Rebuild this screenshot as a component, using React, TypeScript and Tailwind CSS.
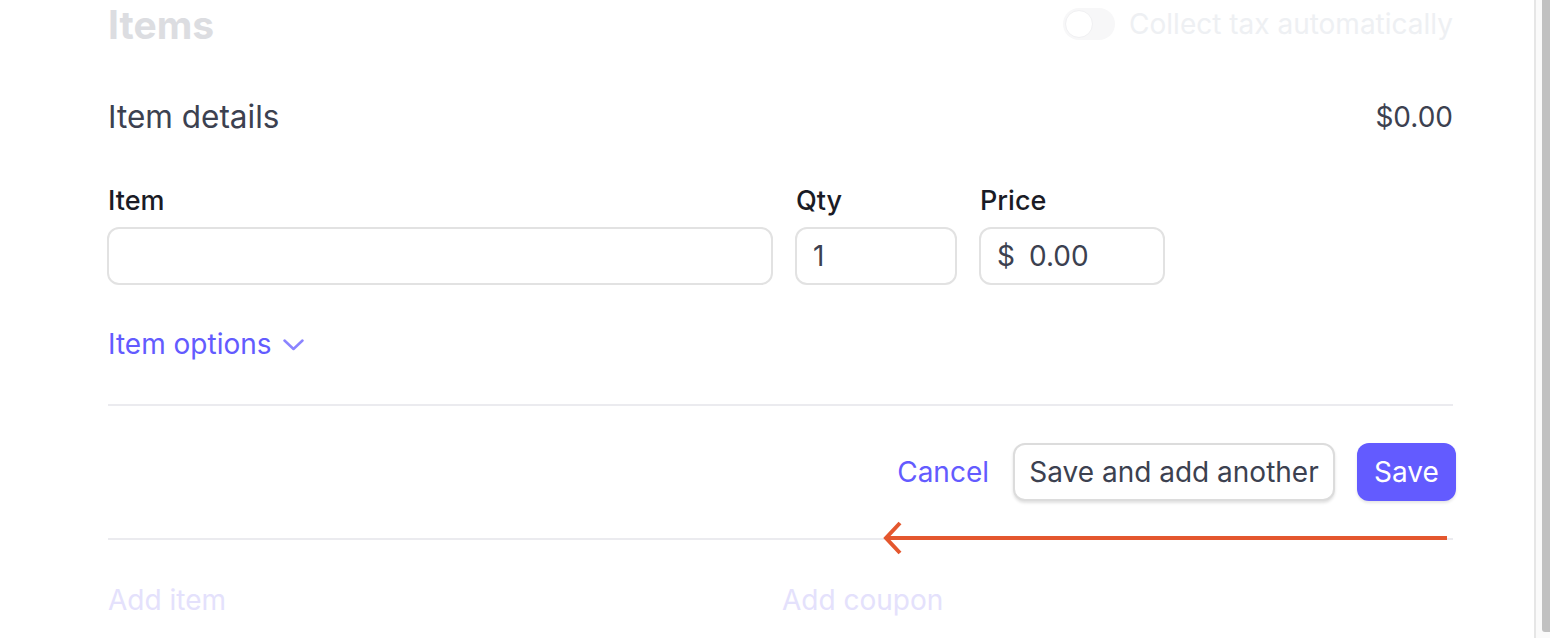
const font = { fontFamily: 'Inter, "Noto Sans", sans-serif' };

export default function App() {
  return (
    <div className="flex h-[638px] w-full overflow-hidden bg-white" style={font}>
      {/* Main panel */}
      <div className="relative flex-1 border-r-2 border-[#e6e6e6] pl-[108px] pr-[81px]">
        {/* Header (faded) */}
        <div className="flex h-[48px] items-center justify-between">
          <h2 className="text-[39px] font-bold leading-none text-[#dcdde1]">Items</h2>
          <div className="flex items-center gap-[14px]">
            <div className="flex h-[32px] w-[52px] items-center rounded-full bg-[#f7f7f8] p-[2px]">
              <div className="h-[28px] w-[28px] rounded-full border border-[#f0f0f2] bg-white" />
            </div>
            <span className="text-[28px] leading-none text-[#eef0f3]">Collect tax automatically</span>
          </div>
        </div>

        {/* Item details */}
        <div className="mt-[51px] flex items-center justify-between leading-[36px]">
          <span className="text-[31.5px] text-[#3c4150]">Item details</span>
          <span className="text-[28px] text-[#3c4150]">$0.00</span>
        </div>

        {/* Fields */}
        <div className="ml-[-1px] mt-[50px] flex gap-[22px]">
          <div className="flex w-[666px] flex-col">
            <label className="pl-[1px] text-[27px] font-medium leading-[32px] text-[#1a1b25]">Item</label>
            <input className="mt-[10px] h-[58px] rounded-[12px] border-2 border-[#e2e2e2] px-5 text-[28px] outline-none" />
          </div>
          <div className="flex w-[162px] flex-col">
            <label className="pl-[1px] text-[27px] font-medium leading-[32px] text-[#1a1b25]">Qty</label>
            <div className="mt-[10px] flex h-[58px] items-center rounded-[12px] border-2 border-[#e2e2e2] px-[16px] text-[28px] text-[#3c4150]">
              1
            </div>
          </div>
          <div className="flex w-[186px] flex-col">
            <label className="pl-[1px] text-[27px] font-medium leading-[32px] text-[#1a1b25]">Price</label>
            <div className="mt-[10px] flex h-[58px] items-center gap-[14px] rounded-[12px] border-2 border-[#e2e2e2] px-[16px] text-[28px] text-[#3c4150]">
              <span>$</span>
              <span>0.00</span>
            </div>
          </div>
        </div>

        {/* Item options */}
        <button className="mt-[43px] flex items-center gap-[11px] text-[28px] leading-[32px] text-[#635bff]">
          Item options
          <svg width="21" height="12" viewBox="0 0 21 12" className="mt-[2px]">
            <polyline points="1.5,1.5 10.5,10 19.5,1.5" fill="none" stroke="#8b84ff" strokeWidth="2.5" strokeLinecap="round" strokeLinejoin="round" />
          </svg>
        </button>

        <div className="mt-[44px] h-[2px] bg-[#ebebef]" />

        {/* Actions */}
        <div className="mr-[-3px] mt-[37px] flex items-center justify-end">
          <button className="mr-[24px] text-[28px] text-[#635bff]">Cancel</button>
          <button className="h-[58px] w-[322px] rounded-[12px] border-2 border-[#dcdcdc] bg-white text-[28px] text-[#3c4150] shadow-[0_2px_3px_rgba(0,0,0,0.12)]">
            Save and add another
          </button>
          <button className="ml-[22px] h-[58px] w-[99px] rounded-[12px] bg-[#635bff] text-[28px] text-white shadow-[0_2px_3px_rgba(0,0,0,0.1)]">
            Save
          </button>
        </div>

        <div className="mt-[37px] h-[2px] bg-[#ebebef]" />

        {/* Faded links */}
        <div className="mt-[44px] flex leading-[32px]">
          <span className="w-[674px] text-[28px] text-[#e4e1fc]">Add item</span>
          <span className="text-[28px] text-[#e4e1fc]">Add coupon</span>
        </div>

        {/* Annotation arrow */}
        <svg className="absolute left-[880px] top-[518px]" width="572" height="40" viewBox="0 0 572 40">
          <line x1="7" y1="20" x2="567" y2="20" stroke="#e4572e" strokeWidth="4" />
          <polyline points="20,5 6,20 20,35" fill="none" stroke="#e4572e" strokeWidth="4" />
        </svg>
      </div>

      {/* Scrollbar */}
      <div className="flex w-[14px] bg-[#fafafa] pl-[6px]">
        <div className="mb-[6px] flex-1 rounded-bl-[3px] bg-[#c1c1c1]" />
      </div>
    </div>
  );
}
